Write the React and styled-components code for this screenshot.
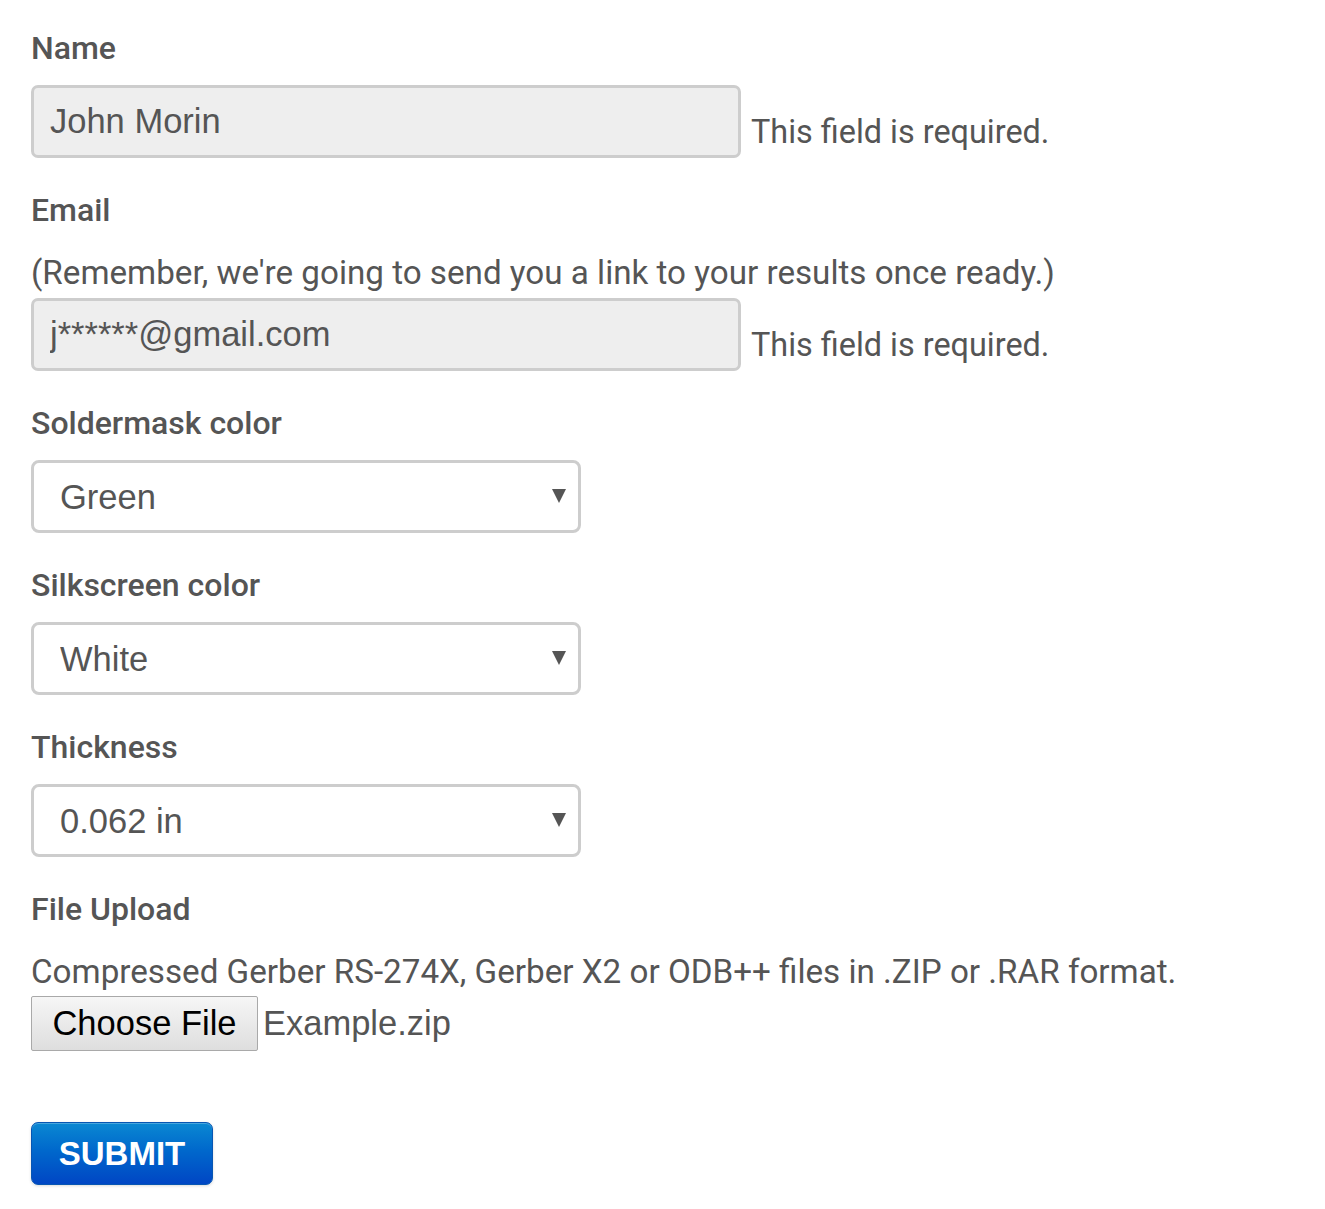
import React from "react";
import styled, { createGlobalStyle } from "styled-components";

const Global = createGlobalStyle`
  html, body { margin: 0; padding: 0; background: #fff; }
  body { font-family: Roboto, "Liberation Sans", sans-serif; color: #555; }
`;

const Form = styled.form`
  display: flex;
  flex-direction: column;
  align-items: flex-start;
  padding: 28px 0 40px 31px;
`;

const Group = styled.div`
  display: flex;
  flex-direction: column;
  align-items: flex-start;
  margin-bottom: 32px;
`;

const Label = styled.label`
  font-family: Roboto, "Liberation Sans", sans-serif;
  font-weight: 500;
  font-size: 32px;
  line-height: 40px;
  color: #555;
  margin-bottom: ${(p) => (p.$tight ? 23 : 17)}px;
`;

const Hint = styled.div`
  font-family: Roboto, "Liberation Sans", sans-serif;
  font-size: 33.2px;
  line-height: 40px;
  color: #555;
  margin-bottom: ${(p) => p.$gap}px;
`;

const Row = styled.div`
  display: flex;
  align-items: flex-end;
  gap: 10px;
`;

const TextInput = styled.input`
  box-sizing: border-box;
  width: 710px;
  height: 73px;
  padding: 0 16px;
  border: 3px solid #cdcdcd;
  border-radius: 7px;
  background: #eee;
  font-family: "Liberation Sans", Arial, sans-serif;
  font-size: 34.5px;
  color: #555;
  outline: none;
`;

const ErrorText = styled.span`
  font-family: Roboto, "Liberation Sans", sans-serif;
  font-size: 32.4px;
  line-height: 40px;
  color: #555;
  margin-bottom: 6px;
`;

const SelectWrap = styled.div`
  position: relative;
  width: 550px;
`;

const Select = styled.select`
  box-sizing: border-box;
  width: 550px;
  height: 73px;
  padding: 0 40px 0 26px;
  border: 3px solid #cdcdcd;
  border-radius: 8px;
  background: #fff;
  appearance: none;
  -webkit-appearance: none;
  font-family: "Liberation Sans", Arial, sans-serif;
  font-size: 34.5px;
  color: #555;
  outline: none;
`;

const Arrow = styled.svg`
  position: absolute;
  right: 15px;
  top: 29px;
  pointer-events: none;
`;

const FileRow = styled.div`
  display: flex;
  align-items: center;
  gap: 5px;
`;

const FileButton = styled.button`
  box-sizing: border-box;
  width: 227px;
  height: 55px;
  border: 1px solid #a9a9a9;
  border-radius: 2px;
  background: linear-gradient(#f6f6f6, #dedede);
  font-family: "Liberation Sans", Arial, sans-serif;
  font-size: 34.5px;
  color: #000;
  padding: 0;
`;

const FileName = styled.span`
  font-family: "Liberation Sans", Arial, sans-serif;
  font-size: 34.5px;
  color: #555;
`;

const Submit = styled.button`
  box-sizing: border-box;
  margin-top: 71px;
  width: 182px;
  height: 63px;
  border: 1px solid #0756b3;
  border-radius: 7px;
  background: linear-gradient(#0a88d2 0%, #0068cc 45%, #0046c4 100%);
  box-shadow: 0 1px 3px rgba(0, 0, 0, 0.15), inset 0 1px 0 rgba(255, 255, 255, 0.25);
  font-family: "Liberation Sans", Arial, sans-serif;
  font-weight: bold;
  font-size: 33px;
  color: #fff;
  padding: 0;
`;

const caret = (
  <Arrow width="14" height="14" viewBox="0 0 14 14">
    <path d="M0 0 H14 L7 14 Z" fill="#555" />
  </Arrow>
);

function Dropdown({ value, options }) {
  return (
    <SelectWrap>
      <Select defaultValue={value}>
        {options.map((o) => (
          <option key={o}>{o}</option>
        ))}
      </Select>
      {caret}
    </SelectWrap>
  );
}

export default function App() {
  return (
    <>
      <Global />
      <Form onSubmit={(e) => e.preventDefault()}>
        <Group>
          <Label>Name</Label>
          <Row>
            <TextInput defaultValue="John Morin" />
            <ErrorText>This field is required.</ErrorText>
          </Row>
        </Group>
        <Group>
          <Label $tight>Email</Label>
          <Hint $gap={5}>(Remember, we're going to send you a link to your results once ready.)</Hint>
          <Row>
            <TextInput defaultValue="j******@gmail.com" />
            <ErrorText>This field is required.</ErrorText>
          </Row>
        </Group>
        <Group>
          <Label>Soldermask color</Label>
          <Dropdown value="Green" options={["Green", "Red", "Blue", "Black", "White", "Yellow"]} />
        </Group>
        <Group>
          <Label>Silkscreen color</Label>
          <Dropdown value="White" options={["White", "Black"]} />
        </Group>
        <Group>
          <Label>Thickness</Label>
          <Dropdown value="0.062 in" options={["0.031 in", "0.062 in", "0.093 in"]} />
        </Group>
        <Group>
          <Label $tight>File Upload</Label>
          <Hint $gap={4}>
            Compressed Gerber RS-274X, Gerber X2 or ODB++ files in .ZIP or .RAR format.
          </Hint>
          <FileRow>
            <FileButton type="button">Choose File</FileButton>
            <FileName>Example.zip</FileName>
          </FileRow>
          <Submit type="submit">SUBMIT</Submit>
        </Group>
      </Form>
    </>
  );
}
